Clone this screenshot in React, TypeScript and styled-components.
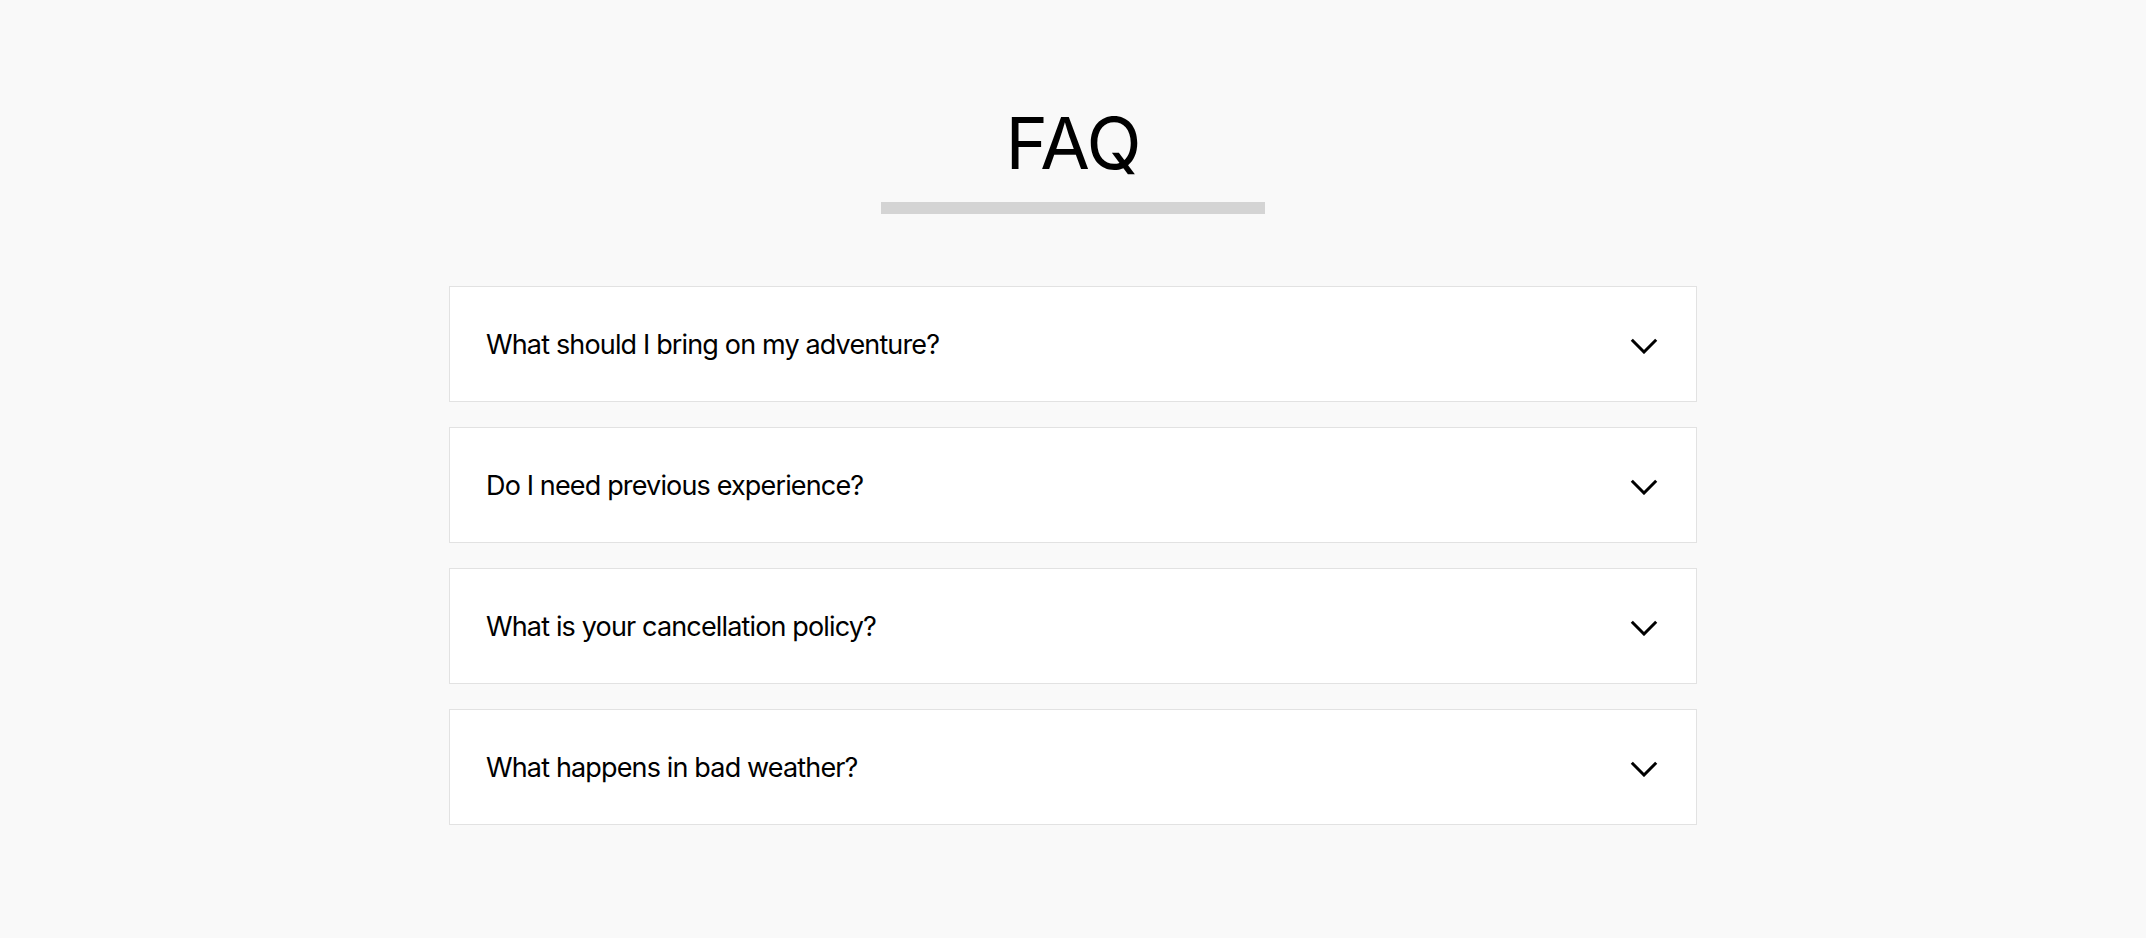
import { useState } from 'react';
import styled, { createGlobalStyle } from 'styled-components';

const GlobalStyle = createGlobalStyle`
  html, body {
    margin: 0;
    padding: 0;
    background: #f9f9f9;
  }

  body {
    font-family: Inter, 'Liberation Sans', Arial, sans-serif;
    color: #000;
  }
`;

const Root = styled.main`
  min-height: 100vh;
  display: flex;
  flex-direction: column;
  align-items: center;
  padding: 107px 0 80px;
  box-sizing: border-box;
`;

const Heading = styled.h1`
  margin: 0;
  font-size: 72px;
  font-weight: 400;
  line-height: 1;
  letter-spacing: -1px;
`;

const Underline = styled.div`
  width: 384px;
  height: 12px;
  margin-top: 23px;
  background: #d4d4d4;
`;

const List = styled.section`
  width: 1248px;
  margin-top: 72px;
  display: flex;
  flex-direction: column;
  gap: 25px;
`;

const Item = styled.div`
  background: #fff;
  border: 1px solid #e2e2e2;
`;

const Question = styled.button`
  width: 100%;
  height: 114px;
  display: flex;
  align-items: center;
  justify-content: space-between;
  padding: 0 38px 0 36px;
  box-sizing: border-box;
  border: 0;
  background: transparent;
  cursor: pointer;
  font-family: inherit;
  font-size: 27px;
  letter-spacing: -0.85px;
  color: #000;
  text-align: left;
`;

const Answer = styled.div`
  padding: 0 36px 32px;
  font-size: 20px;
  line-height: 1.6;
  color: #444;
`;

const Chevron = styled.svg<{ $open: boolean }>`
  width: 28px;
  height: 16px;
  margin-top: 3px;
  flex-shrink: 0;
  transform: rotate(${(p) => (p.$open ? 180 : 0)}deg);
  transition: transform 0.2s;
`;

const faqs = [
  {
    q: 'What should I bring on my adventure?',
    a: 'Comfortable clothes, sturdy shoes, water and sun protection. We provide all the technical gear.',
  },
  {
    q: 'Do I need previous experience?',
    a: 'No. Our guides tailor every trip to the group, beginners included.',
  },
  {
    q: 'What is your cancellation policy?',
    a: 'Cancel up to 48 hours before departure for a full refund.',
  },
  {
    q: 'What happens in bad weather?',
    a: 'If conditions are unsafe we reschedule or refund your booking.',
  },
];

export default function App() {
  const [open, setOpen] = useState<number | null>(null);

  return (
    <Root>
      <GlobalStyle />
      <Heading>FAQ</Heading>
      <Underline />
      <List>
        {faqs.map((item, i) => (
          <Item key={item.q}>
            <Question onClick={() => setOpen(open === i ? null : i)}>
              {item.q}
              <Chevron $open={open === i} viewBox="0 0 28 16">
                <polyline
                  points="1.8,1.8 14,14 26.2,1.8"
                  fill="none"
                  stroke="#000"
                  strokeWidth="3"
                />
              </Chevron>
            </Question>
            {open === i && <Answer>{item.a}</Answer>}
          </Item>
        ))}
      </List>
    </Root>
  );
}
